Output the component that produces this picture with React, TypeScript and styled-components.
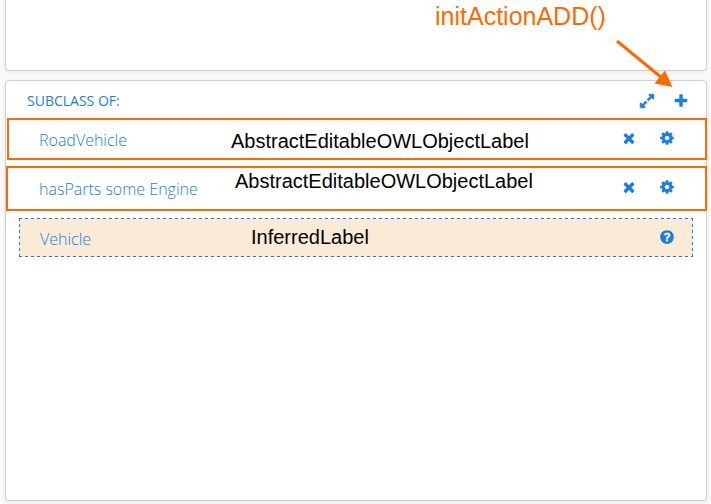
import React from "react";
import styled, { createGlobalStyle } from "styled-components";

const BLUE = "#1a7ee0";
const ORANGE = "#ff6a00";

const GlobalStyle = createGlobalStyle`
  *, *::before, *::after { box-sizing: border-box; }
  html, body { margin: 0; height: 100%; overflow: hidden; background: #fafafa; }
  body { font-family: "Open Sans", sans-serif; }
`;

const Page = styled.main`
  position: relative;
  display: flex;
  flex-direction: column;
  gap: 9px;
  width: 711px;
  height: 504px;
  padding: 0 4px 3px 5px;
  overflow: hidden;
`;

const Card = styled.section<{ $height: number; $clipped?: boolean }>`
  flex: none;
  height: ${(p) => p.$height}px;
  background: #fff;
  border: 1px solid #cfcfcf;
  border-top-width: ${(p) => (p.$clipped ? 0 : 1)}px;
  border-radius: ${(p) => (p.$clipped ? "0 0 4px 4px" : "4px")};
  box-shadow: 0 1px 4px rgba(0, 0, 0, 0.08);
`;

const Header = styled.header`
  display: flex;
  align-items: center;
  height: 37px;
  padding: 2px 17px 0 21px;
`;

const Title = styled.h2`
  flex: 1;
  margin: 0;
  font-size: 14px;
  font-weight: 400;
  line-height: 20px;
  color: ${BLUE};
`;

const Actions = styled.div<{ $gap: number; $lift: number }>`
  display: flex;
  align-items: center;
  gap: ${(p) => p.$gap}px;
  padding-bottom: ${(p) => p.$lift}px;
`;

const IconButton = styled.button`
  display: flex;
  padding: 0;
  border: 0;
  background: none;
  color: ${BLUE};
`;

const Row = styled.div<{ $height: number; $inset: number }>`
  position: relative;
  display: flex;
  align-items: center;
  height: ${(p) => p.$height}px;
  margin: 0 -1px 6px ${(p) => p.$inset}px;
  padding: 0 30px 0 ${(p) => 31 - p.$inset}px;
  border: 2px solid ${ORANGE};
`;

const dash = (side: string) =>
  `repeating-linear-gradient(${side}, ${BLUE} 0 3px, transparent 3px 6px)`;

const InferredRow = styled.div`
  position: relative;
  display: flex;
  align-items: center;
  height: 39px;
  margin: 7px 13px 0 13px;
  padding: 0 18.5px 0 21px;
  background:
    ${dash("to right")} top / 100% 1px no-repeat,
    ${dash("to right")} bottom / 100% 1px no-repeat,
    ${dash("to bottom")} left / 1px 100% no-repeat,
    ${dash("to bottom")} right / 1px 100% no-repeat,
    #faebd7;
`;

const Label = styled.span<{ $drop?: number }>`
  flex: 1;
  padding-top: ${(p) => p.$drop ?? 0}px;
  font-size: 16px;
  font-weight: 300;
  line-height: 24px;
  color: ${BLUE};
`;

const Note = styled.span<{ $x: number; $y: number }>`
  position: absolute;
  left: ${(p) => p.$x}px;
  top: ${(p) => p.$y}px;
  font-family: "Liberation Sans", Arial, sans-serif;
  font-size: 20px;
  line-height: 24px;
  color: #000;
  white-space: nowrap;
`;

const Callout = styled(Note)`
  font-size: 25px;
  line-height: 30px;
  color: ${ORANGE};
`;

const Arrow = styled.svg`
  position: absolute;
  left: 610px;
  top: 34px;
  pointer-events: none;
`;

const paths = {
  expand:
    "M883 1056q0 13-10 23l-332 332 144 144q19 19 19 45t-19 45-45 19h-448q-26 0-45-19t-19-45v-448q0-26 19-45t45-19 45 19l144 144 332-332q10-10 23-10t23 10l114 114q10 10 10 23zm781-864v448q0 26-19 45t-45 19-45-19l-144-144-332 332q-10 10-23 10t-23-10l-114-114q-10-10-10-23t10-23l332-332-144-144q-19-19-19-45t19-45 45-19h448q26 0 45 19t19 45z",
  plus: "M1600 736v192q0 40-28 68t-68 28h-416v416q0 40-28 68t-68 28h-192q-40 0-68-28t-28-68v-416h-416q-40 0-68-28t-28-68v-192q0-40 28-68t68-28h416v-416q0-40 28-68t68-28h192q40 0 68 28t28 68v416h416q40 0 68 28t28 68z",
  times:
    "M1490 1322q0 40-28 68l-136 136q-28 28-68 28t-68-28l-294-294-294 294q-28 28-68 28t-68-28l-136-136q-28-28-28-68t28-68l294-294-294-294q-28-28-28-68t28-68l136-136q28-28 68-28t68 28l294 294 294-294q28-28 68-28t68 28l136 136q28 28 28 68t-28 68l-294 294 294 294q28 28 28 68z",
  cog: "M1152 896q0-106-75-181t-181-75-181 75-75 181 75 181 181 75 181-75 75-181zm512-109v222q0 12-8 23t-20 13l-185 28q-19 54-39 91 35 50 107 138 10 12 10 25t-9 23q-27 37-99 108t-94 71q-12 0-26-9l-138-108q-44 23-91 38-16 136-29 186-7 28-36 28h-222q-14 0-24.5-8.5t-11.5-21.5l-28-184q-49-16-90-37l-141 107q-10 9-25 9-14 0-25-11-126-114-165-168-7-10-7-23 0-12 8-23 15-21 51-66.5t54-70.5q-27-50-41-99l-183-27q-13-2-21-12.5t-8-23.5v-222q0-12 8-23t19-13l186-28q14-46 39-92-40-57-107-138-10-12-10-24 0-10 9-23 26-36 98.5-107.5t94.5-71.5q13 0 26 10l138 107q44-23 91-38 16-136 29-186 7-28 36-28h222q14 0 24.5 8.5t11.5 21.5l28 184q49 16 90 37l142-107q9-9 24-9 13 0 25 10 129 119 165 170 7 8 7 22 0 12-8 23-15 21-51 66.5t-54 70.5q26 50 41 98l183 28q13 2 21 12.5t8 23.5z",
  question:
    "M1024 1376v-192q0-14-9-23t-23-9h-192q-14 0-23 9t-9 23v192q0 14 9 23t23 9h192q14 0 23-9t9-23zm256-672q0-88-55.5-163t-138.5-116-170-41q-243 0-371 213-15 24 8 42l132 100q7 6 19 6 16 0 25-12 53-68 86-92 34-24 86-24 48 0 85.5 26t37.5 59q0 38-20 61t-68 45q-63 28-115.5 86.5t-52.5 125.5v36q0 14 9 23t23 9h192q14 0 23-9t9-23q0-19 21.5-49.5t54.5-49.5q32-18 49-28.5t46-35 44.5-48 28-60.5 12.5-81zm384 192q0 209-103 385.5t-279.5 279.5-385.5 103-385.5-103-279.5-279.5-103-385.5 103-385.5 279.5-279.5 385.5-103 385.5 103 279.5 279.5 103 385.5z",
};

function Action({ icon, label, weight = 0 }: { icon: keyof typeof paths; label: string; weight?: number }) {
  return (
    <IconButton aria-label={label}>
      <svg
        width="16"
        height="16"
        viewBox="0 0 1792 1792"
        fill="currentColor"
        stroke="currentColor"
        strokeWidth={weight}
      >
        <path d={paths[icon]} />
      </svg>
    </IconButton>
  );
}

function EditableRow(props: {
  text: string;
  height: number;
  inset: number;
  drop?: number;
  lift: number;
  note: [number, number];
}) {
  return (
    <Row $height={props.height} $inset={props.inset}>
      <Label $drop={props.drop}>{props.text}</Label>
      <Actions $gap={22} $lift={props.lift}>
        <Action icon="times" label="Remove" />
        <Action icon="cog" label="Settings" />
      </Actions>
      <Note $x={props.note[0]} $y={props.note[1]}>
        AbstractEditableOWLObjectLabel
      </Note>
    </Row>
  );
}

export default function App() {
  return (
    <>
      <GlobalStyle />
      <Page>
        <Card $height={71} $clipped />
        <Card $height={421}>
          <Header>
            <Title>SUBCLASS OF:</Title>
            <Actions $gap={18} $lift={0}>
              <Action icon="expand" label="Expand" weight={70} />
              <Action icon="plus" label="Add" />
            </Actions>
          </Header>
          <EditableRow text="RoadVehicle" height={42} inset={1} drop={2} lift={2} note={[222, 9]} />
          <EditableRow text="hasParts some Engine" height={45} inset={0} lift={2.4} note={[227, 1]} />
          <InferredRow>
            <Label $drop={2}>Vehicle</Label>
            <Actions $gap={0} $lift={1}>
              <Action icon="question" label="Explain" />
            </Actions>
            <Note $x={232} $y={7}>
              InferredLabel
            </Note>
          </InferredRow>
        </Card>
        <Callout $x={435} $y={1}>
          initActionADD()
        </Callout>
        <Arrow width="66" height="56" viewBox="610 34 66 56">
          <path d="M617 41L662 78" stroke={ORANGE} strokeWidth="3" />
          <path d="M672.5 87L665 70.5L654.500 83.500Z" fill={ORANGE} />
        </Arrow>
      </Page>
    </>
  );
}
